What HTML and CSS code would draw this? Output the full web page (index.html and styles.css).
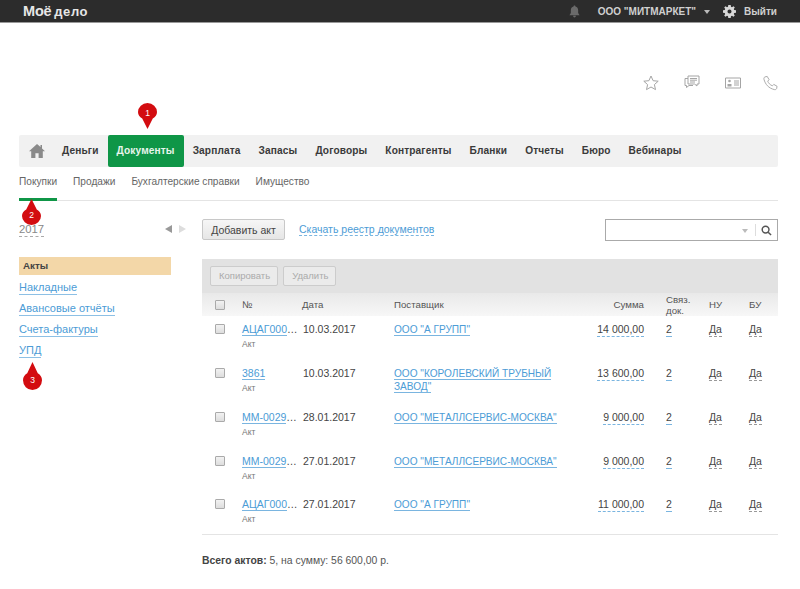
FILE: index.html
```html
<!DOCTYPE html>
<html lang="ru">
<head>
<meta charset="utf-8">
<title>Моё дело</title>
<link rel="stylesheet" href="styles.css">
</head>
<body>
<header class="topbar">
  <div class="logo">Моё <span class="logo-small">дело</span></div>
  <div class="top-right">
    <svg class="bell" viewBox="0 0 12 13"><path d="M6 0c.7 0 1 .5 1 1 2 .5 3 2 3 4v3l1.500 2.500H.5L2 8V5c0-2 1-3.500 3-4 0-.5.300-1 1-1zM4.500 11.200h3C7.500 12.200 6.800 13 6 13s-1.500-.8-1.500-1.800z"/></svg>
    <span class="company">ООО "МИТМАРКЕТ"</span>
    <span class="caret"></span>
    <svg class="gear" viewBox="0 0 14 14"><path fill-rule="evenodd" d="M5.700 0h2.600l.3 1.900 1.100.5L11.300 1.300l1.400 1.400-1.100 1.600.5 1.100 1.900.3v2.600l-1.900.3-.5 1.100 1.100 1.600-1.400 1.400-1.600-1.100-1.100.5-.3 1.900H5.700l-.3-1.900-1.100-.5-1.600 1.100-1.400-1.400 1.100-1.600-.5-1.100L0 8.300V5.700l1.900-.3.5-1.100-1.100-1.600 1.400-1.400 1.600 1.100 1.100-.5zM7 4.800a2.200 2.200 0 1 0 0 4.400 2.200 2.200 0 0 0 0-4.400z"/></svg>
    <span class="logout">Выйти</span>
  </div>
</header>

<div class="tools">
  <svg class="tool tool-star" viewBox="0 0 16 16"><path d="M8 1l2.100 4.700 5.100.5-3.800 3.400 1.100 5L8 12l-4.500 2.600 1.100-5L.8 6.200l5.100-.5z"/></svg>
  <svg class="tool tool-chat" viewBox="0 0 16 14"><path d="M4 1h11v8h-2v2l-2.500-2H4zM4 3.500H1v7h1.500v2l2.500-2h4M6 3.500h7M6 5.200h7M6 7h5"/></svg>
  <svg class="tool tool-card" viewBox="0 0 16 12"><path d="M.5 1h15v10H.5zM9 4h5M9 6h5M9 8h5"/><circle class="fill" cx="4.500" cy="4" r="1.300"/><path class="fill" d="M2.500 9.500V7h4v2.500z"/></svg>
  <svg class="tool tool-phone" viewBox="0 0 16 16"><path d="M2 1.500L4.500 1l2 3.500L5 6c.7 2 2.500 4 5 5l1.500-1.500L15 11.500l-.5 2.500c-.5 1-1.500 1.300-2.500 1C6 13.500 2.500 9.500 1 4c-.2-1 .2-2 1-2.500z"/></svg>
</div>

<div class="page">
  <nav class="mainnav">
    <svg class="home" viewBox="0 0 16 14"><path d="M8 0l3.500 3V1H13v3.500L16 7.300h-2.200V14H9.600V9.300H6.400V14H2.200V7.300H0z"/></svg>
    <a class="nav-item">Деньги</a>
    <a class="nav-item active">Документы</a>
    <a class="nav-item">Зарплата</a>
    <a class="nav-item">Запасы</a>
    <a class="nav-item">Договоры</a>
    <a class="nav-item">Контрагенты</a>
    <a class="nav-item">Бланки</a>
    <a class="nav-item">Отчеты</a>
    <a class="nav-item">Бюро</a>
    <a class="nav-item">Вебинары</a>
  </nav>
  <div class="subnav">
    <a class="sub-item current">Покупки</a>
    <a class="sub-item">Продажи</a>
    <a class="sub-item">Бухгалтерские справки</a>
    <a class="sub-item">Имущество</a>
  </div>

  <div class="columns">
    <aside class="side">
      <div class="year-row">
        <span class="year">2017</span>
        <span class="arrows"><i class="arrow-left"></i><i class="arrow-right"></i></span>
      </div>
      <div class="side-active">Акты</div>
      <a class="side-link">Накладные</a>
      <a class="side-link">Авансовые отчёты</a>
      <a class="side-link">Счета-фактуры</a>
      <a class="side-link">УПД</a>
    </aside>

    <main class="content">
      <div class="toolbar">
        <button class="btn">Добавить акт</button>
        <a class="dash-link">Скачать реестр документов</a>
        <div class="search">
          <span class="search-caret"></span>
          <span class="search-sep"></span>
          <svg class="search-icon" viewBox="0 0 12 12"><circle cx="5" cy="5" r="3.700"/><path d="M7.800 7.800L11 11"/></svg>
        </div>
      </div>
      <div class="actions">
        <span class="btn-off">Копировать</span>
        <span class="btn-off">Удалить</span>
      </div>
      <table class="grid">
        <thead>
          <tr>
            <th class="c-check"><span class="check"></span></th>
            <th class="c-num">№</th>
            <th class="c-date">Дата</th>
            <th class="c-sup">Поставщик</th>
            <th class="c-sum">Сумма</th>
            <th class="c-rel">Связ.<br>док.</th>
            <th class="c-nu">НУ</th>
            <th class="c-bu">БУ</th>
          </tr>
        </thead>
        <tbody>
          <tr>
            <td><span class="check"></span></td>
            <td><a class="link">АЦАГ000</a>…<div class="kind">Акт</div></td>
            <td class="date">10.03.2017</td>
            <td><a class="link org">ООО "А ГРУПП"</a></td>
            <td class="c-sum"><span class="dash-num">14 000,00</span></td>
            <td><span class="dash-num">2</span></td>
            <td><span class="dash-gray">Да</span></td>
            <td><span class="dash-gray">Да</span></td>
          </tr>
          <tr>
            <td><span class="check"></span></td>
            <td><a class="link">3861</a><div class="kind">Акт</div></td>
            <td class="date">10.03.2017</td>
            <td><a class="link org">ООО "КОРОЛЕВСКИЙ ТРУБНЫЙ ЗАВОД"</a></td>
            <td class="c-sum"><span class="dash-num">13 600,00</span></td>
            <td><span class="dash-num">2</span></td>
            <td><span class="dash-gray">Да</span></td>
            <td><span class="dash-gray">Да</span></td>
          </tr>
          <tr>
            <td><span class="check"></span></td>
            <td><a class="link">ММ-0029</a>…<div class="kind">Акт</div></td>
            <td class="date">28.01.2017</td>
            <td><a class="link org">ООО "МЕТАЛЛСЕРВИС-МОСКВА"</a></td>
            <td class="c-sum"><span class="dash-num">9 000,00</span></td>
            <td><span class="dash-num">2</span></td>
            <td><span class="dash-gray">Да</span></td>
            <td><span class="dash-gray">Да</span></td>
          </tr>
          <tr>
            <td><span class="check"></span></td>
            <td><a class="link">ММ-0029</a>…<div class="kind">Акт</div></td>
            <td class="date">27.01.2017</td>
            <td><a class="link org">ООО "МЕТАЛЛСЕРВИС-МОСКВА"</a></td>
            <td class="c-sum"><span class="dash-num">9 000,00</span></td>
            <td><span class="dash-num">2</span></td>
            <td><span class="dash-gray">Да</span></td>
            <td><span class="dash-gray">Да</span></td>
          </tr>
          <tr>
            <td><span class="check"></span></td>
            <td><a class="link">АЦАГ000</a>…<div class="kind">Акт</div></td>
            <td class="date">27.01.2017</td>
            <td><a class="link org">ООО "А ГРУПП"</a></td>
            <td class="c-sum"><span class="dash-num">11 000,00</span></td>
            <td><span class="dash-num">2</span></td>
            <td><span class="dash-gray">Да</span></td>
            <td><span class="dash-gray">Да</span></td>
          </tr>
        </tbody>
      </table>
      <p class="total"><b>Всего актов:</b> 5, на сумму: 56 600,00 р.</p>
    </main>
  </div>
</div>

<div class="pin pin-1"><svg viewBox="0 0 18 26" preserveAspectRatio="none"><path d="M9 26L4 15.500C1.500 14 0 11.800 0 9a9 9 0 0 1 18 0c0 2.800-1.500 5-4 6.500z"/></svg><span>1</span></div>
<div class="pin pin-2"><svg viewBox="0 0 18 26" preserveAspectRatio="none"><path d="M9 0L14 10.500C16.500 12 18 14.200 18 17a9 9 0 0 1-18 0c0-2.800 1.500-5 4-6.500z"/></svg><span>2</span></div>
<div class="pin pin-3"><svg viewBox="0 0 18 26" preserveAspectRatio="none"><path d="M9 0L14 10.500C16.500 12 18 14.200 18 17a9 9 0 0 1-18 0c0-2.800 1.500-5 4-6.500z"/></svg><span>3</span></div>
</body>
</html>
```

FILE: styles.css
```css
* { box-sizing: border-box; }
html, body { margin: 0; padding: 0; }
body {
  position: relative;
  height: 589px;
  overflow: hidden;
  background: #fff;
  color: #444;
  font-family: "Liberation Sans", Arial, sans-serif;
  font-size: 10.5px;
}
a { cursor: pointer; }

.topbar {
  height: 23px;
  background: #2c2c2c;
  border-bottom: 1px solid #999;
  display: flex;
  align-items: center;
  justify-content: space-between;
  padding: 0 23px 0 23px;
  color: #ddd;
}
.logo { color: #e6e6e6; font: bold 14.5px "Liberation Sans", sans-serif; letter-spacing: -0.2px; }
.logo-small { font-size: 13px; letter-spacing: 0.6px; margin-left: -1px; }
.top-right { display: flex; align-items: center; font-weight: bold; font-size: 10px; }
.bell { width: 11px; height: 13px; fill: #6a6a6a; margin-right: 18px; }
.company { color: #d0d0d0; }
.caret {
  width: 0; height: 0;
  margin: 2px 0 0 8px;
  border: 3px solid transparent;
  border-top: 4px solid #bbb;
  border-bottom: 0;
}
.gear { width: 13px; height: 13px; fill: #d8d8d8; margin: 0 8px 0 13px; }
.logout { color: #d0d0d0; }

.tools {
  height: 112px;
  display: flex;
  justify-content: flex-end;
  align-items: flex-start;
  padding: 52px 22px 0 0;
}
.tool { fill: none; stroke: #a5a5a5; stroke-width: 1; }
.tool .fill { fill: #a5a5a5; stroke: none; }
.tool-star { width: 16px; height: 16px; margin-right: 25px; }
.tool-chat { width: 16px; height: 14px; margin-right: 25px; }
.tool-card { width: 16px; height: 12px; margin: 2px 22px 0 0; }
.tool-phone { width: 15px; height: 16px; }

.page { padding: 0 22px 0 19px; }

.mainnav {
  height: 32px;
  background: #f1f1f1;
  border-radius: 2px;
  display: flex;
  align-items: center;
}
.home { width: 16px; height: 14px; fill: #8a8a8a; margin: 0 8px 0 10px; flex: none; }
.nav-item {
  height: 32px;
  line-height: 31px;
  padding: 0 9px;
  font-weight: bold;
  font-size: 10.15px;
  letter-spacing: 0.13px;
  color: #3a3a3a;
}
.nav-item.active {
  background: #0f9647;
  color: #e8f5ec;
  border-radius: 2px;
}

.subnav {
  height: 34px;
  display: flex;
  gap: 16px;
  border-bottom: 1px solid #e4e4e4;
}
.sub-item {
  height: 34px;
  padding-top: 9px;
  color: #666;
  font-size: 10.15px;
}
.sub-item.current { border-bottom: 3px solid #0f9647; }

.columns { display: flex; gap: 31px; }
.side { width: 152px; flex: none; }
.year-row {
  display: flex;
  justify-content: space-between;
  align-items: center;
  height: 20px;
  margin-top: 18px;
}
.year { color: #888; font-size: 11.3px; border-bottom: 1px dashed #aaa; line-height: 14px; }
.arrows { display: flex; gap: 7px; margin-right: -15px; }
.arrow-left, .arrow-right {
  width: 0; height: 0;
  border: 4px solid transparent;
  border-left: 0; border-right: 0;
}
.arrow-left { border-right: 7px solid #999; }
.arrow-right { border-left: 7px solid #ddd; }

.side-active {
  margin-top: 18px;
  height: 18px;
  line-height: 18px;
  padding-left: 4px;
  background: #f3d7a8;
  color: #444;
  font-weight: bold;
  font-size: 9.8px;
}
.side-link {
  display: table;
  margin-top: 6px;
  color: #4c9cd6;
  font-size: 11px;
  line-height: 14px;
  border-bottom: 1px solid #8dc0e5;
}
.side-active + .side-link { margin-top: 5px; }

.content { flex: 1; min-width: 0; }
.toolbar {
  height: 58px;
  padding-top: 18px;
  display: flex;
  align-items: flex-start;
}
.btn {
  width: 83px;
  height: 21px;
  padding: 0;
  font: 10.5px "Liberation Sans", sans-serif;
  color: #444;
  background: linear-gradient(#f6f6f6, #e6e6e6);
  border: 1px solid #c8c8c8;
  border-radius: 2px;
}
.dash-link {
  margin: 4px 0 0 14px;
  color: #4c9cd6;
  font-size: 10.5px;
  line-height: 12px;
  border-bottom: 1px dashed #7ab5e0;
}
.search {
  margin-left: auto;
  width: 173px;
  height: 22px;
  border: 1px solid #aaa;
  display: flex;
  align-items: center;
  justify-content: flex-end;
  padding-right: 5px;
}
.search-caret {
  width: 0; height: 0;
  margin: 2px 7px 0 0;
  border: 3px solid transparent;
  border-top: 4px solid #bbb;
  border-bottom: 0;
}
.search-sep { width: 1px; height: 12px; background: #ddd; margin-right: 5px; }
.search-icon { width: 11px; height: 11px; fill: none; stroke: #555; stroke-width: 1.600; }

.actions {
  height: 34px;
  background: #e2e2e2;
  padding: 7px 0 0 8px;
  display: flex;
  gap: 5px;
}
.btn-off {
  height: 20px;
  line-height: 18px;
  padding: 0 7px 0 8px;
  border: 1px solid #ccc;
  border-radius: 2px;
  background: #ebebeb;
  color: #aaa;
  font-size: 9.5px;
}

.grid {
  width: 100%;
  border-collapse: collapse;
  table-layout: fixed;
  border-bottom: 1px solid #e4e4e4;
}
.grid th {
  height: 23px;
  padding: 0;
  text-align: left;
  vertical-align: middle;
  font-weight: normal;
  font-size: 9.7px;
  line-height: 11px;
  color: #555;
  background: linear-gradient(#e9e9e9, #f7f7f7);
}
.grid td {
  height: 44px;
  padding: 7px 0 0;
  vertical-align: top;
  font-size: 10.5px;
  line-height: 12px;
  color: #444;
}
.grid tbody tr:last-child td { height: 42px; padding-top: 6px; }
.grid td.date { padding-left: 1px; }
.c-check { width: 40px; padding-left: 13px !important; }
.grid td:first-child { padding-left: 13px; }
.c-num { width: 60px; }
.c-date { width: 92px; }
.c-sup { width: 176px; }
.c-sum { width: 96px; padding-right: 22px !important; text-align: right !important; }
.c-rel { width: 43px; }
.c-nu { width: 40px; }
.c-bu { width: 29px; }
.check {
  display: block;
  width: 10px;
  height: 10px;
  margin-top: 1px;
  border: 1px solid #aaa;
  border-radius: 1px;
  background: linear-gradient(#f2f2f2, #ddd);
}
.link { color: #4c9cd6; border-bottom: 1px solid #7ab5e0; }
.org { font-size: 10.1px; }
.kind { margin-top: 4px; color: #777; font-size: 8.5px; line-height: 10px; }
.dash-num { border-bottom: 1px dashed #7ab5e0; padding-bottom: 1px; }
.dash-gray { border-bottom: 1px dashed #999; padding-bottom: 1px; }

.total { margin: 19px 0 0; font-size: 10.4px; line-height: 13px; color: #555; }
.total b { color: #444; }

.pin { position: absolute; width: 19px; height: 26px; }
.pin svg { display: block; width: 19px; height: 26px; fill: #d30c10; }
.pin span {
  position: absolute;
  left: 0;
  width: 19px;
  text-align: center;
  color: #fff;
  font-size: 8.5px;
  line-height: 10px;
}
.pin-1 { left: 138px; top: 103px; }
.pin-1 span { top: 5px; }
.pin-2 { left: 22px; top: 199px; }
.pin-2 span { top: 11px; }
.pin-3 { left: 23px; top: 362px; height: 28px; }
.pin-3 svg { height: 28px; }
.pin-3 span { top: 13px; }
```
